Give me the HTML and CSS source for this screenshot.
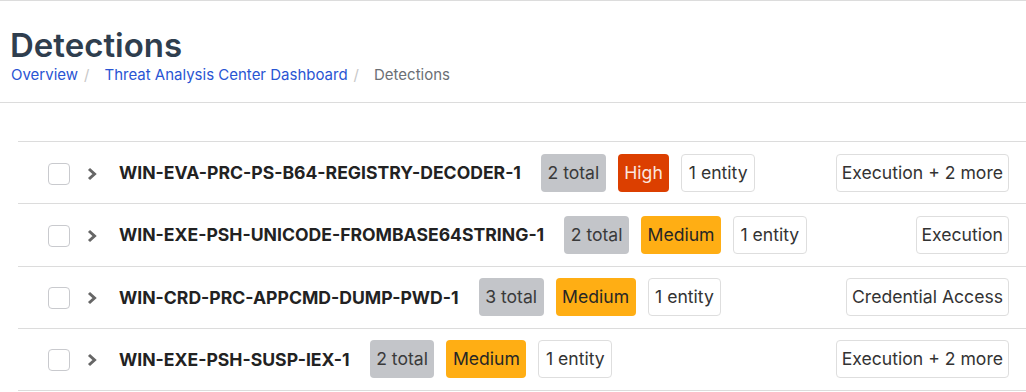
FILE: index.html
```html
<!DOCTYPE html>
<html lang="en">
<head>
<meta charset="utf-8">
<title>Detections</title>
<link rel="stylesheet" href="styles.css">
</head>
<body>
<header class="page-header">
  <h1 class="page-title">Detections</h1>
  <nav class="breadcrumb">
    <a href="#">Overview</a><span class="sep">/</span><a href="#">Threat Analysis Center Dashboard</a><span class="sep">/</span><span class="current">Detections</span>
  </nav>
</header>
<ul class="det-list">
  <li class="det-row">
    <span class="check"></span>
    <svg class="chev" viewBox="0 0 10 14" width="10" height="14"><path d="M2 2 L7.5 7 L2 12" /></svg>
    <span class="det-name">WIN-EVA-PRC-PS-B64-REGISTRY-DECODER-1</span>
    <span class="badge total">2 total</span>
    <span class="badge high">High</span>
    <span class="badge outline">1 entity</span>
    <span class="badge outline tactic">Execution + 2 more</span>
  </li>
  <li class="det-row">
    <span class="check"></span>
    <svg class="chev" viewBox="0 0 10 14" width="10" height="14"><path d="M2 2 L7.5 7 L2 12" /></svg>
    <span class="det-name">WIN-EXE-PSH-UNICODE-FROMBASE64STRING-1</span>
    <span class="badge total">2 total</span>
    <span class="badge medium">Medium</span>
    <span class="badge outline">1 entity</span>
    <span class="badge outline tactic">Execution</span>
  </li>
  <li class="det-row">
    <span class="check"></span>
    <svg class="chev" viewBox="0 0 10 14" width="10" height="14"><path d="M2 2 L7.5 7 L2 12" /></svg>
    <span class="det-name">WIN-CRD-PRC-APPCMD-DUMP-PWD-1</span>
    <span class="badge total">3 total</span>
    <span class="badge medium">Medium</span>
    <span class="badge outline">1 entity</span>
    <span class="badge outline tactic">Credential Access</span>
  </li>
  <li class="det-row">
    <span class="check"></span>
    <svg class="chev" viewBox="0 0 10 14" width="10" height="14"><path d="M2 2 L7.5 7 L2 12" /></svg>
    <span class="det-name">WIN-EXE-PSH-SUSP-IEX-1</span>
    <span class="badge total">2 total</span>
    <span class="badge medium">Medium</span>
    <span class="badge outline">1 entity</span>
    <span class="badge outline tactic">Execution + 2 more</span>
  </li>
</ul>
</body>
</html>
```

FILE: styles.css
```css
html, body {
  margin: 0;
  padding: 0;
  background: #fff;
}
body {
  font-family: Inter, "Noto Sans", sans-serif;
  color: #333;
  border-top: 1px solid #dcdcdc;
}
.page-header {
  padding: 25px 10px 17px 10px;
  border-bottom: 1px solid #dcdcdc;
}
.page-title {
  margin: 0;
  font-size: 33px;
  line-height: 38px;
  font-weight: 600;
  color: #2f3e4e;
}
.breadcrumb {
  font-size: 15px;
  line-height: 20px;
  display: flex;
  align-items: center;
  padding: 1px 0 0 1px;
}
.breadcrumb a {
  color: #2a55d3;
  text-decoration: none;
}
.breadcrumb .sep {
  color: #c8c8c8;
  margin: 0 15px 0 6px;
}
.breadcrumb .current {
  color: #6b6f75;
}
.det-list {
  list-style: none;
  margin: 38px 0 0 18px;
  padding: 0;
  border-top: 1px solid #dcdcdc;
}
.det-row {
  display: flex;
  align-items: center;
  height: 61.25px;
  border-bottom: 1px solid #dcdcdc;
  padding: 0 17px 0 30px;
}
.check {
  width: 20px;
  height: 20px;
  border: 1.5px solid #c9cace;
  border-radius: 4px;
  flex: none;
  margin-top: 2px;
}
.chev {
  flex: none;
  margin-left: 17px;
  margin-top: 2px;
}
.chev path {
  fill: none;
  stroke: #666;
  stroke-width: 3;
  stroke-linejoin: miter;
}
.det-name {
  margin-left: 22px;
  font-size: 17.6px;
  font-weight: 700;
  color: #222;
  margin-right: 8px;
}
.badge {
  font-size: 17.6px;
  line-height: 24px;
  padding: 7px 6.5px;
  border-radius: 4px;
  margin-left: 12px;
  color: #333;
  white-space: nowrap;
}
.badge.total {
  background: #c3c5c9;
  color: #3a3a3a;
}
.badge.high {
  background: #dc3f00;
  color: #fbe6df;
}
.badge.medium {
  background: #ffae14;
  color: #262626;
}
.badge.outline {
  background: #fff;
  border: 1px solid #dedede;
  padding: 6px 6.5px;
}
.badge.tactic {
  margin-left: auto;
  padding: 6px 5px;
}
```
